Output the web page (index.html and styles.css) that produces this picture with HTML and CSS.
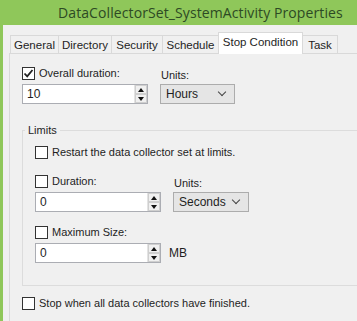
FILE: index.html
```html
<!DOCTYPE html>
<html lang="en">
<head>
<meta charset="UTF-8">
<title>DataCollectorSet_SystemActivity Properties</title>
<link rel="stylesheet" href="styles.css">
</head>
<body>
<div class="window">
    <div class="titlebar">DataCollectorSet_SystemActivity Properties</div>
    <div class="frame">
        <div class="tabs">
            <div class="tab t-general">General</div>
            <div class="tab t-directory">Directory</div>
            <div class="tab t-security">Security</div>
            <div class="tab t-schedule">Schedule</div>
            <div class="tab t-stop active">Stop Condition</div>
            <div class="tab t-task">Task</div>
        </div>
        <div class="panel">
            <div class="row">
                <div class="col wide">
                    <label class="check"><span class="box checked"><svg width="11" height="11" viewBox="0 0 11 11"><path d="M1.5 5.5 L4.2 8.3 L9.5 2" fill="none" stroke="#222" stroke-width="1.8"/></svg></span>Overall duration:</label>
                    <div class="spin">
                        <div class="field">10</div>
                        <div class="arrows"><span class="up"></span><span class="down"></span></div>
                    </div>
                </div>
                <div class="col">
                    <div class="label">Units:</div>
                    <div class="select w75">Hours<span class="chev"></span></div>
                </div>
            </div>

            <fieldset class="limits">
                <legend>Limits</legend>
                <label class="check"><span class="box"></span>Restart the data collector set at limits.</label>

                <div class="row gap-top">
                    <div class="col wide">
                        <label class="check"><span class="box"></span>Duration:</label>
                        <div class="spin">
                            <div class="field">0</div>
                            <div class="arrows"><span class="up"></span><span class="down"></span></div>
                        </div>
                    </div>
                    <div class="col">
                        <div class="label">Units:</div>
                        <div class="select w76">Seconds<span class="chev"></span></div>
                    </div>
                </div>

                <div class="row gap-top2">
                    <div class="col wide">
                        <label class="check"><span class="box"></span>Maximum Size:</label>
                        <div class="spin">
                            <div class="field">0</div>
                            <div class="arrows"><span class="up"></span><span class="down"></span></div>
                        </div>
                    </div>
                    <div class="unit">MB</div>
                </div>
            </fieldset>

            <label class="check last"><span class="box"></span>Stop when all data collectors have finished.</label>
        </div>
    </div>
</div>
</body>
</html>
```

FILE: styles.css
```css
body {
    margin: 0;
    font-family: "Liberation Sans", Arial, sans-serif;
    font-size: 11px;
    color: #1e1e1e;
    background: #f0f0f0;
}

.window {
    width: 357px;
    height: 321px;
    overflow: hidden;
}

.titlebar {
    height: 25px;
    background: #8fc75a;
    color: #2d4a24;
    font-family: "Open Sans", sans-serif;
    font-size: 14px;
    letter-spacing: 0.1px;
    line-height: 26px;
    padding-left: 58px;
    white-space: nowrap;
}

.frame {
    border-left: 3px solid #8fc75a;
    height: 296px;
    padding: 6px 0 0 6px;
    background: #f0f0f0;
}

.tabs {
    display: flex;
    align-items: flex-end;
    height: 22px;
    padding-left: 1px;
}

.tab {
    height: 17px;
    line-height: 18px;
    text-align: center;
    font-size: 11.5px;
    border: 1px solid #d9d9d9;
    border-bottom: none;
    margin-right: -1px;
    background: #f0f0f0;
    white-space: nowrap;
    box-sizing: content-box;
}

.t-general { width: 47px; }
.t-directory { width: 52px; }
.t-security { width: 50px; }
.t-schedule { width: 55px; }
.t-stop { width: 83px; }
.t-task { width: 34px; }

.tab.active {
    height: 21px;
    line-height: 19px;
    margin-bottom: -1px;
    background: #fff;
    position: relative;
    z-index: 1;
}

.panel {
    border-top: 1px solid #d9d9d9;
    border-left: 1px solid #d9d9d9;
    height: 280px;
    padding: 12px 0 0 12px;
}

.row {
    display: flex;
    align-items: flex-end;
}

.col {
    display: flex;
    flex-direction: column;
}

.col.wide {
    width: 138px;
}

.check {
    display: flex;
    align-items: center;
    height: 14px;
    white-space: nowrap;
}

.box {
    width: 11px;
    height: 11px;
    border: 1px solid #333;
    background: #fff;
    margin-right: 4px;
    display: flex;
}

.label {
    height: 14px;
    line-height: 14px;
    margin-bottom: 2px;
    padding-left: 1px;
}

.spin {
    display: flex;
    margin-top: 4px;
    width: 126px;
    height: 20px;
    border: 1px solid #abadb3;
    background: #fff;
    box-sizing: border-box;
}

.field {
    flex: 1;
    padding-left: 4px;
    line-height: 18px;
    font-size: 12px;
}

.arrows {
    width: 12px;
    display: flex;
    flex-direction: column;
    border-left: 1px solid #e3e3e3;
    background: #f0f0f0;
}

.arrows span {
    flex: 1;
    display: flex;
    align-items: center;
    justify-content: center;
    border: 1px solid #cfcfcf;
}

.arrows span::before {
    content: "";
    border-left: 3px solid transparent;
    border-right: 3px solid transparent;
}

.arrows .up::before {
    border-bottom: 4px solid #111;
}

.arrows .down::before {
    border-top: 4px solid #111;
}

.select {
    height: 20px;
    box-sizing: border-box;
    border: 1px solid #acacac;
    background: #e5e5e5;
    padding-left: 5px;
    line-height: 18px;
    font-size: 12px;
    display: flex;
    justify-content: space-between;
}

.w75 { width: 75px; }
.w76 { width: 76px; }

.chev {
    width: 5px;
    height: 5px;
    border-right: 1.6px solid #444;
    border-bottom: 1.6px solid #444;
    transform: rotate(45deg);
    margin: 4px 9px 0 0;
}

.limits {
    margin: 20px 0 0 0;
    padding: 9px 0 22px 12px;
    border: 1px solid #dcdcdc;
    border-right: none;
    width: 340px;
    box-sizing: border-box;
}

.limits legend {
    padding: 0 3px;
    margin-left: -10px;
}

.gap-top {
    margin-top: 15px;
}

.gap-top2 {
    margin-top: 13px;
}

.unit {
    line-height: 20px;
    margin-left: -4px;
    font-size: 12px;
}

.last {
    margin-top: 10px;
}
```
